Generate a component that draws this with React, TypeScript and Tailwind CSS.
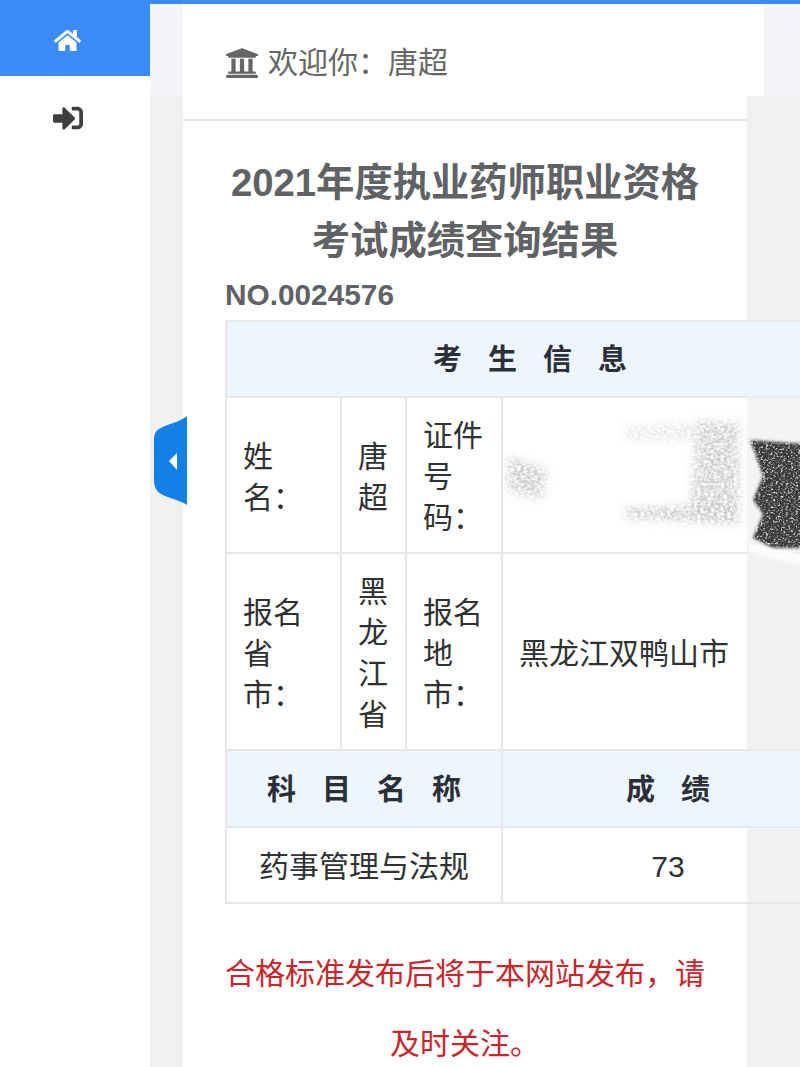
import React from "react";
import { FaHome, FaSignInAlt, FaUniversity } from "react-icons/fa";

const cellBase = "border-2 border-[#e7e7e9] pt-[3px] pb-0 align-middle text-[30px] leading-[41px] text-[#303133] font-normal";
const cellText = `${cellBase} pl-[16px] pr-[9px] text-left`;
const cellCenter = `${cellBase} px-[10px] text-center`;
const headText = "border-2 border-[#e7e7e9] bg-[#edf5fe] pt-[2px] pb-0 pr-0 pl-[26px] text-center align-middle text-[29px] leading-[40px] font-bold text-[#2b2f38] tracking-[26px]";

function Scribble() {
  return (
    <svg className="absolute left-[-2px] top-[-2px] pointer-events-none" width="332" height="200" viewBox="0 0 332 200">
      <defs>
        <filter id="inkDark" x="-10%" y="-10%" width="120%" height="120%">
          <feGaussianBlur in="SourceGraphic" stdDeviation="1.5" result="soft" />
          <feTurbulence type="fractalNoise" baseFrequency="0.4 0.55" numOctaves="4" seed="4" />
          <feColorMatrix values="0 0 0 0 0  0 0 0 0 0  0 0 0 0 0  0 0 0 3 -0.5" />
          <feComposite in="soft" operator="in" />
        </filter>
        <filter id="inkLight" x="-15%" y="-15%" width="130%" height="130%">
          <feGaussianBlur in="SourceGraphic" stdDeviation="5" result="soft" />
          <feTurbulence type="fractalNoise" baseFrequency="0.3 0.4" numOctaves="4" seed="9" />
          <feColorMatrix values="0 0 0 0 0  0 0 0 0 0  0 0 0 0 0  0 0 0 2.2 -0.55" />
          <feComposite in="soft" operator="in" />
        </filter>
      </defs>
      <path d="M246 0H332V180L246 160Z" fill="#ffffff" opacity="0.25" />
      <path d="M248 156L332 176V164L248 148Z" fill="#ffffff" opacity="0.7" />
      <g filter="url(#inkLight)">
        <path d="M8 60L46 74L40 104L6 94Z" fill="#c8c8c8" />
        <path d="M124 30L218 26V44H124Z" fill="#e6e6e6" />
        <path d="M196 26H238V124H188Z" fill="#cbcbcb" />
        <path d="M124 112L238 110V128L124 122Z" fill="#c4c4c4" />
      </g>
      <g filter="url(#inkDark)">
        <path d="M249 44L332 50V152H272L252 142L262 118L252 104L262 80Z" fill="#3a3a3a" />
      </g>
    </svg>
  );
}

export default function App() {
  return (
    <div className="relative flex h-[1067px] w-[800px] flex-col overflow-hidden bg-white font-['Liberation_Sans','Noto_Sans_CJK_SC',sans-serif]">
      <div className="h-[4px] shrink-0 bg-[#3a8bf5]" />
      <div className="flex min-h-0 flex-1">
        <aside className="w-[150px] shrink-0 bg-white">
          <div className="flex h-[72px] items-center justify-center bg-[#3a8bf5] pr-[16px] text-white">
            <FaHome size={27} />
          </div>
          <div className="flex h-[84px] items-center justify-center pr-[15px] text-[#3f3f3f]">
            <FaSignInAlt size={30} />
          </div>
        </aside>
        <main className="relative flex-1 bg-[linear-gradient(#f4f5f9_92px,#f1f1f1_92px)] pl-[33px]">
          <header className="flex h-[117px] w-[581px] items-center gap-[9px] border-b-2 border-[#e7e7e7] bg-white pl-[42px] pt-[2px] text-[30px] text-[#666666]">
            <FaUniversity size={34} className="text-[#666666]" />
            <span>欢迎你：唐超</span>
          </header>
          <div className="absolute left-[597px] top-[92px] bottom-0 w-[53px] bg-[#f1f1f1]" />
          <section className="relative h-[946px] w-[564px] bg-white px-[42px] pt-[33px]">
            <h1 className="w-[480px] text-center text-[38.3px] font-bold leading-[58px] text-[#606266]">
              2021年度执业药师职业资格
              <br />
              考试成绩查询结果
            </h1>
            <p className="h-[50px] text-[29.8px] font-bold leading-[50px] text-[#606266]">NO.0024576</p>
            <table className="relative z-10 w-[608px] table-fixed border-collapse">
              <colgroup>
                <col className="w-[115px]" />
                <col className="w-[65px]" />
                <col className="w-[96px]" />
                <col className="w-[332px]" />
              </colgroup>
              <tbody>
                <tr className="h-[76px]">
                  <th colSpan={4} className={headText}>考生信息</th>
                </tr>
                <tr className="h-[156px]">
                  <td className={cellText}>姓名：</td>
                  <td className={cellText}>唐超</td>
                  <td className={cellText}>证件号码：</td>
                  <td className={`${cellText} relative`}>
                    <Scribble />
                  </td>
                </tr>
                <tr className="h-[197px]">
                  <td className={cellText}>报名省市：</td>
                  <td className={cellText}>黑龙江省</td>
                  <td className={cellText}>报名地市：</td>
                  <td className={cellText}>黑龙江双鸭山市</td>
                </tr>
                <tr className="h-[77px]">
                  <th colSpan={3} className={headText}>科目名称</th>
                  <th className={headText}>成绩</th>
                </tr>
                <tr className="h-[76px]">
                  <td colSpan={3} className={cellCenter}>药事管理与法规</td>
                  <td className={cellCenter}>73</td>
                </tr>
              </tbody>
            </table>
            <p className="mt-[35px] w-[480px] text-center text-[30px] leading-[70px] text-[#c9252b]">
              合格标准发布后将于本网站发布，请及时关注。
            </p>
            <svg className="absolute left-[-29px] top-[295px]" width="34" height="90" viewBox="0 0 34 90">
              <path d="M33 0V89C26 84 14 82 7 78C2 75 0 70 0 64V24C0 18 2 14 7 12C14 8 26 6 33 0Z" fill="#1380e6" />
              <path d="M15 45L23 37V54Z" fill="#ffffff" />
            </svg>
          </section>
        </main>
      </div>
    </div>
  );
}
